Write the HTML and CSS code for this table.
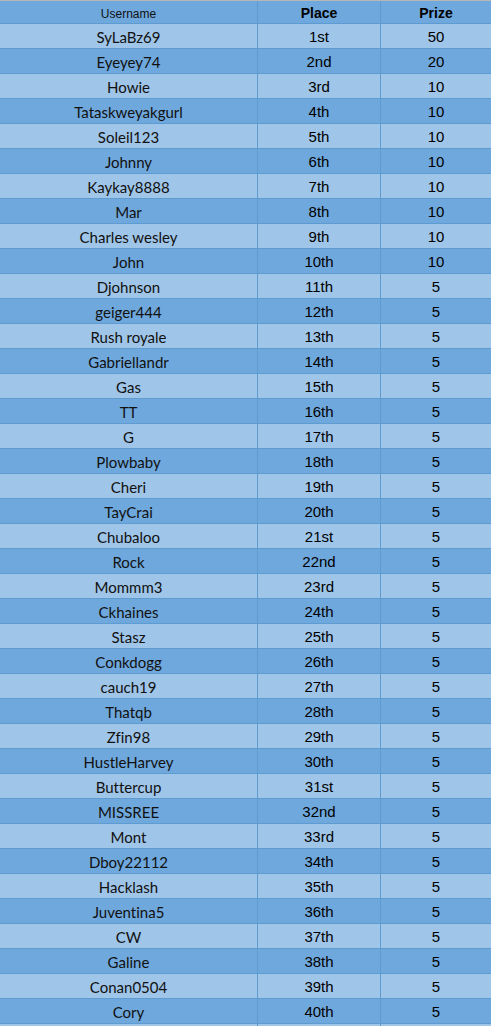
FILE: index.html
```html
<!DOCTYPE html>
<html>
<head>
<meta charset="utf-8">
<link rel="stylesheet" href="styles.css">
</head>
<body>
<div class="sheet">
  <div class="row head">
    <div class="cell user small">Username</div>
    <div class="cell place bold">Place</div>
    <div class="cell prize bold">Prize</div>
  </div>
  <div class="row light"><div class="cell user">SyLaBz69</div><div class="cell place">1st</div><div class="cell prize">50</div></div>
  <div class="row dark"><div class="cell user">Eyeyey74</div><div class="cell place">2nd</div><div class="cell prize">20</div></div>
  <div class="row light"><div class="cell user">Howie</div><div class="cell place">3rd</div><div class="cell prize">10</div></div>
  <div class="row dark"><div class="cell user">Tataskweyakgurl</div><div class="cell place">4th</div><div class="cell prize">10</div></div>
  <div class="row light"><div class="cell user">Soleil123</div><div class="cell place">5th</div><div class="cell prize">10</div></div>
  <div class="row dark"><div class="cell user">Johnny</div><div class="cell place">6th</div><div class="cell prize">10</div></div>
  <div class="row light"><div class="cell user">Kaykay8888</div><div class="cell place">7th</div><div class="cell prize">10</div></div>
  <div class="row dark"><div class="cell user">Mar</div><div class="cell place">8th</div><div class="cell prize">10</div></div>
  <div class="row light"><div class="cell user">Charles wesley</div><div class="cell place">9th</div><div class="cell prize">10</div></div>
  <div class="row dark"><div class="cell user">John</div><div class="cell place">10th</div><div class="cell prize">10</div></div>
  <div class="row light"><div class="cell user">Djohnson</div><div class="cell place">11th</div><div class="cell prize">5</div></div>
  <div class="row dark"><div class="cell user">geiger444</div><div class="cell place">12th</div><div class="cell prize">5</div></div>
  <div class="row light"><div class="cell user">Rush royale</div><div class="cell place">13th</div><div class="cell prize">5</div></div>
  <div class="row dark"><div class="cell user">Gabriellandr</div><div class="cell place">14th</div><div class="cell prize">5</div></div>
  <div class="row light"><div class="cell user">Gas</div><div class="cell place">15th</div><div class="cell prize">5</div></div>
  <div class="row dark"><div class="cell user">TT</div><div class="cell place">16th</div><div class="cell prize">5</div></div>
  <div class="row light"><div class="cell user">G</div><div class="cell place">17th</div><div class="cell prize">5</div></div>
  <div class="row dark"><div class="cell user">Plowbaby</div><div class="cell place">18th</div><div class="cell prize">5</div></div>
  <div class="row light"><div class="cell user">Cheri</div><div class="cell place">19th</div><div class="cell prize">5</div></div>
  <div class="row dark"><div class="cell user">TayCrai</div><div class="cell place">20th</div><div class="cell prize">5</div></div>
  <div class="row light"><div class="cell user">Chubaloo</div><div class="cell place">21st</div><div class="cell prize">5</div></div>
  <div class="row dark"><div class="cell user">Rock</div><div class="cell place">22nd</div><div class="cell prize">5</div></div>
  <div class="row light"><div class="cell user">Mommm3</div><div class="cell place">23rd</div><div class="cell prize">5</div></div>
  <div class="row dark"><div class="cell user">Ckhaines</div><div class="cell place">24th</div><div class="cell prize">5</div></div>
  <div class="row light"><div class="cell user">Stasz</div><div class="cell place">25th</div><div class="cell prize">5</div></div>
  <div class="row dark"><div class="cell user">Conkdogg</div><div class="cell place">26th</div><div class="cell prize">5</div></div>
  <div class="row light"><div class="cell user">cauch19</div><div class="cell place">27th</div><div class="cell prize">5</div></div>
  <div class="row dark"><div class="cell user">Thatqb</div><div class="cell place">28th</div><div class="cell prize">5</div></div>
  <div class="row light"><div class="cell user">Zfin98</div><div class="cell place">29th</div><div class="cell prize">5</div></div>
  <div class="row dark"><div class="cell user">HustleHarvey</div><div class="cell place">30th</div><div class="cell prize">5</div></div>
  <div class="row light"><div class="cell user">Buttercup</div><div class="cell place">31st</div><div class="cell prize">5</div></div>
  <div class="row dark"><div class="cell user">MISSREE</div><div class="cell place">32nd</div><div class="cell prize">5</div></div>
  <div class="row light"><div class="cell user">Mont</div><div class="cell place">33rd</div><div class="cell prize">5</div></div>
  <div class="row dark"><div class="cell user">Dboy22112</div><div class="cell place">34th</div><div class="cell prize">5</div></div>
  <div class="row light"><div class="cell user">Hacklash</div><div class="cell place">35th</div><div class="cell prize">5</div></div>
  <div class="row dark"><div class="cell user">Juventina5</div><div class="cell place">36th</div><div class="cell prize">5</div></div>
  <div class="row light"><div class="cell user">CW</div><div class="cell place">37th</div><div class="cell prize">5</div></div>
  <div class="row dark"><div class="cell user">Galine</div><div class="cell place">38th</div><div class="cell prize">5</div></div>
  <div class="row light"><div class="cell user">Conan0504</div><div class="cell place">39th</div><div class="cell prize">5</div></div>
  <div class="row dark"><div class="cell user">Cory</div><div class="cell place">40th</div><div class="cell prize">5</div></div>
  <div class="row light"><div class="cell user"></div><div class="cell place"></div><div class="cell prize"></div></div>
</div>
</body>
</html>
```

FILE: styles.css
```css
html, body {
  margin: 0;
  padding: 0;
  background: #9fc5e8;
  overflow: hidden;
}
.sheet {
  width: 491px;
  border-top: 1px solid #b7b7b7;
}
.row {
  display: grid;
  grid-template-columns: 258px 123px 1fr;
  height: 24px;
  border-bottom: 1px solid #5d9bd1;
  color: #000;
}
.row.head {
  height: 22px;
  background: #6fa8dc;
}
.dark { background: #6fa8dc; }
.light { background: #9fc5e8; }
.cell {
  display: flex;
  align-items: center;
  justify-content: center;
  padding-top: 1px;
  font-family: "Liberation Sans", Arial, sans-serif;
  font-size: 15px;
  font-variant-ligatures: none;
}
.cell.user, .cell.place {
  border-right: 1px solid #5d9bd1;
}
.cell.user {
  font-family: Lato, "Open Sans", sans-serif;
  font-size: 15px;
  color: #111;
}
.cell.small {
  font-family: "Liberation Sans", Arial, sans-serif;
  font-size: 12px;
  padding-top: 4px;
}
.cell.bold {
  font-weight: bold;
  font-size: 14px;
  padding-top: 2px;
}
```
